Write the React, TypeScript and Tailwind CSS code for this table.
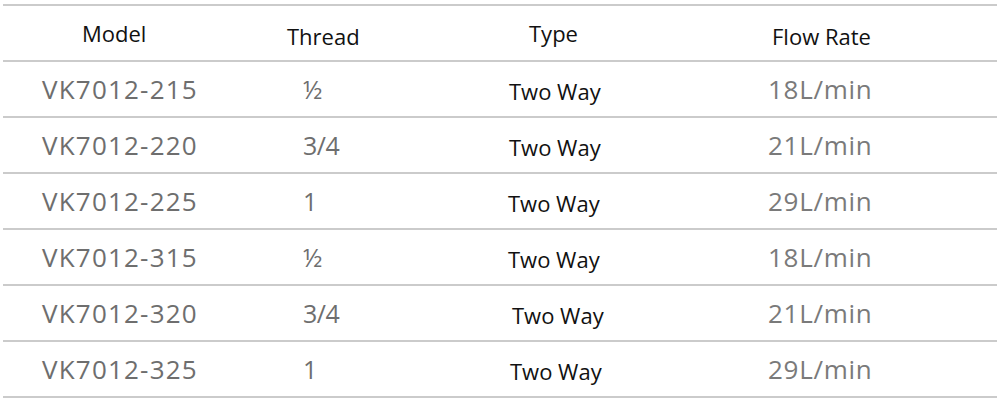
import React from "react";

type Row = { model: string; thread: string; type: string; flow: string; typeShift: string };

const rows: Row[] = [
  { model: "VK7012-215", thread: "½", type: "Two Way", flow: "18L/min", typeShift: "pl-[26px]" },
  { model: "VK7012-220", thread: "3/4", type: "Two Way", flow: "21L/min", typeShift: "pl-[26px]" },
  { model: "VK7012-225", thread: "1", type: "Two Way", flow: "29L/min", typeShift: "pl-[25px]" },
  { model: "VK7012-315", thread: "½", type: "Two Way", flow: "18L/min", typeShift: "pl-[25px]" },
  { model: "VK7012-320", thread: "3/4", type: "Two Way", flow: "21L/min", typeShift: "pl-[29px]" },
  { model: "VK7012-325", thread: "1", type: "Two Way", flow: "29L/min", typeShift: "pl-[27px]" },
];

export default function App() {
  return (
    <div
      className="w-[1005px] h-[403px] bg-white pt-[4px] pl-[3px]"
      style={{ fontFamily: '"Open Sans", "Noto Sans", sans-serif' }}
    >
      <div className="w-[994px] border-b-2 border-[#cbcbcb]">
        <div className="flex h-[56px] border-t-2 border-[#cbcbcb] text-[22px] leading-[30px] text-[#111]">
          <div className="w-[260px] pl-[79px] pt-[12px]">Model</div>
          <div className="w-[220px] pl-[24px] pt-[15px]">Thread</div>
          <div className="w-[220px] pl-[46px] pt-[12px]">Type</div>
          <div className="flex-1 pl-[69px] pt-[15px]">Flow Rate</div>
        </div>
        {rows.map((r, i) => (
          <div key={i} className="flex h-[56px] border-t-2 border-[#cbcbcb]">
            <div className="w-[260px] pl-[39px] pt-[9px] text-[26px] leading-[36px] tracking-[1.2px] text-[#6e6e6e]">
              {r.model}
            </div>
            <div className="w-[220px] pl-[40px] pt-[9px] text-[25px] leading-[36px] tracking-[-0.5px] text-[#6e6e6e]">
              {r.thread}
            </div>
            <div className={`w-[220px] ${r.typeShift} pt-[14px] text-[22px] leading-[30px] text-[#111]`}>
              {r.type}
            </div>
            <div className="flex-1 pl-[65px] pt-[9px] text-[26px] leading-[36px] tracking-[0.7px] font-medium text-[#7a7a7a]">
              {r.flow}
            </div>
          </div>
        ))}
      </div>
    </div>
  );
}
